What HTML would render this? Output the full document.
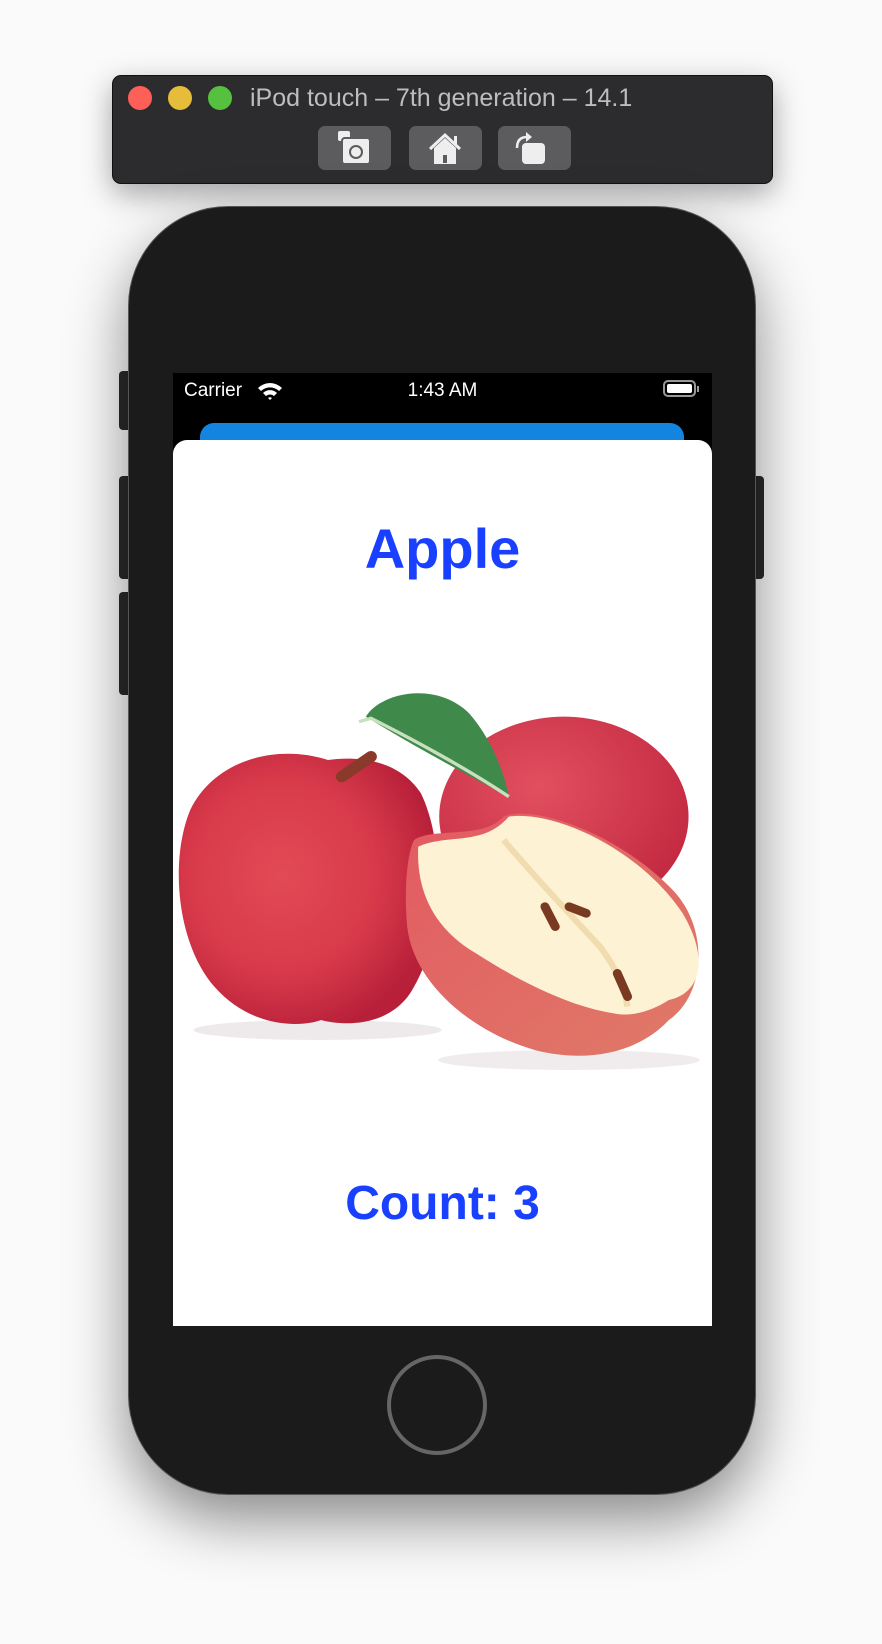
<!DOCTYPE html>
<html><head><meta charset="utf-8"><style>
html,body{margin:0;padding:0;width:882px;height:1644px;background:#fafafa;overflow:hidden;font-family:"Liberation Sans",sans-serif;position:relative}
.abs{position:absolute}
.bar{left:112px;top:75px;width:661px;height:109px;background:#2c2c2e;border-radius:9px;box-shadow:0 10px 30px rgba(0,0,0,.35);border:1px solid #111;box-sizing:border-box}
.dot{width:24px;height:24px;border-radius:50%;top:86px}
.btn{top:126px;width:73px;height:44px;background:#5c5c5f;border-radius:7px}
.phone{left:128px;top:206px;width:628px;height:1289px;background:#1b1b1b;border-radius:100px;box-shadow:0 25px 60px rgba(0,0,0,.45);border:1px solid #555;box-sizing:border-box}
.side{background:#2a2a2a;border-radius:4px 0 0 4px}
.screen{left:173px;top:373px;width:539px;height:953px;background:#000;overflow:hidden}
</style></head><body>
<div class="abs bar"></div>
<div class="abs dot" style="left:128px;background:#fe5f57"></div>
<div class="abs dot" style="left:168px;background:#e6bd3a"></div>
<div class="abs dot" style="left:208px;background:#56c03f"></div>
<div class="abs" style="left:250px;top:84px;font-size:25px;color:#bdbdbd;white-space:nowrap">iPod touch – 7th generation – 14.1</div>
<div class="abs btn" style="left:318px"></div>
<div class="abs btn" style="left:409px"></div>
<div class="abs btn" style="left:498px"></div>
<svg class="abs" style="left:318px;top:126px" width="73" height="44" viewBox="0 0 73 44"><rect x="20" y="5" width="12" height="10" rx="2" fill="#eee"/><rect x="24" y="12" width="28" height="26" rx="3" fill="#eee" stroke="#5c5c5f" stroke-width="2"/><circle cx="38" cy="26" r="6" fill="none" stroke="#5c5c5f" stroke-width="2"/></svg>
<svg class="abs" style="left:409px;top:126px" width="73" height="44" viewBox="0 0 73 44"><path d="M21 23 L36 9 L51 23" fill="none" stroke="#eee" stroke-width="3"/><path d="M25 22 L36 12 L47 22 V38 H25Z" fill="#eee"/><rect x="34" y="29" width="4" height="8" fill="#5c5c5f"/><rect x="45" y="10" width="3" height="8" fill="#eee"/></svg>
<svg class="abs" style="left:498px;top:126px" width="73" height="44" viewBox="0 0 73 44"><rect x="24" y="17" width="23" height="21" rx="4" fill="#eee"/><path d="M19 22 C19 14 23 11 29 11" fill="none" stroke="#eee" stroke-width="2.5"/><path d="M28 6 L34 11 L28 16Z" fill="#eee"/></svg>

<div class="abs side" style="left:119px;top:371px;width:10px;height:59px"></div>
<div class="abs side" style="left:119px;top:476px;width:10px;height:103px"></div>
<div class="abs side" style="left:119px;top:592px;width:10px;height:103px"></div>
<div class="abs" style="left:754px;top:476px;width:10px;height:103px;background:#2a2a2a;border-radius:0 4px 4px 0"></div>
<div class="abs phone"></div>

<div class="abs screen">
  <div class="abs" style="left:11px;top:7px;font-size:19px;color:#fff">Carrier</div>
  <svg class="abs" style="left:84px;top:8px" width="26" height="20" viewBox="0 0 26 20"><path d="M1 7 A17 17 0 0 1 25 7 L22 10 A13 13 0 0 0 4 10Z M6 12 A10 10 0 0 1 20 12 L17 15 A6 6 0 0 0 9 15Z M11 17 A3 3 0 0 1 15 17 L13 19Z" fill="#fff"/></svg>
  <div class="abs" style="left:0;width:539px;top:7px;text-align:center;font-size:19px;color:#fff">1:43 AM</div>
  <div class="abs" style="left:490px;top:7px;width:33px;height:17px;border:2px solid #999;border-radius:5px;box-sizing:border-box;padding:2px"><div style="width:100%;height:100%;background:#fff;border-radius:2px"></div></div>
  <div class="abs" style="left:524px;top:13px;width:2px;height:6px;background:#999"></div>
  <div class="abs" style="left:27px;top:50px;width:484px;height:60px;background:#1385e0;border-radius:14px"></div>
  <div class="abs" style="left:0;top:67px;width:539px;height:900px;background:#fff;border-radius:14px 14px 0 0"></div>
  <div class="abs" style="left:0;width:539px;top:143px;text-align:center;font-size:56px;font-weight:bold;color:#1a40ff">Apple</div>
  <div class="abs" style="left:0;width:539px;top:803px;text-align:center;font-size:48px;font-weight:bold;color:#1a40ff">Count: 3</div>
</div>

<svg class="abs" style="left:173px;top:660px" width="540" height="440" viewBox="0 0 1568 1320" preserveAspectRatio="none">
<defs>
<radialGradient id="r1" cx="0.4" cy="0.45" r="0.6"><stop offset="0" stop-color="#e24a55"/><stop offset="0.6" stop-color="#d83a4a"/><stop offset="1" stop-color="#b8203a"/></radialGradient>
<radialGradient id="r2" cx="0.4" cy="0.35" r="0.7"><stop offset="0" stop-color="#e25060"/><stop offset="1" stop-color="#c22840"/></radialGradient>
<linearGradient id="sk" x1="0" y1="0" x2="1" y2="1"><stop offset="0" stop-color="#e25a62"/><stop offset="1" stop-color="#e07a68"/></linearGradient>
</defs>
<ellipse cx="420" cy="1110" rx="360" ry="30" fill="#eeeaec"/>
<ellipse cx="1150" cy="1200" rx="380" ry="30" fill="#f0ecee"/>
<ellipse cx="1135" cy="470" rx="362" ry="300" fill="url(#r2)"/>
<path d="M450 300 C300 250 120 300 50 450 C-10 600 10 850 120 980 C230 1110 380 1100 430 1080 C500 1100 640 1100 700 980 C790 820 790 550 720 400 C650 290 520 290 450 300Z" fill="url(#r1)"/>
<path d="M575 290 L490 350" stroke="#8a3a2a" stroke-width="34" stroke-linecap="round"/>
<path d="M700 540 C760 500 900 540 960 470 C1040 430 1300 520 1460 700 C1560 820 1540 1010 1440 1080 C1350 1180 1200 1210 1050 1170 C880 1120 700 980 680 800 C670 690 680 580 700 540Z" fill="url(#sk)"/>
<path d="M712 560 C800 520 900 560 975 470 C1100 450 1350 560 1480 760 C1560 900 1530 1000 1440 1020 C1380 1060 1320 1070 1280 1060 C1150 1040 1000 960 880 880 C780 820 705 720 712 560Z" fill="#fdf2d4"/>
<path d="M960 540 C1050 650 1150 760 1240 860 C1290 930 1310 980 1320 1040" stroke="#f0dcae" stroke-width="18" fill="none"/>
<path d="M1080 740 L1110 800 M1150 740 L1200 760 M1290 940 L1320 1010" stroke="#7a3a22" stroke-width="26" stroke-linecap="round"/>
<path d="M560 170 C600 100 760 60 860 160 C920 230 960 330 975 410 C900 370 700 260 560 170Z" fill="#3f8a4a"/>
<path d="M540 185 L575 175 C700 240 860 330 975 410" stroke="#c8e0c0" stroke-width="10" fill="none"/>
</svg>

<div class="abs" style="left:387px;top:1355px;width:100px;height:100px;border:4px solid #666;border-radius:50%;box-sizing:border-box"></div>
</body></html>
